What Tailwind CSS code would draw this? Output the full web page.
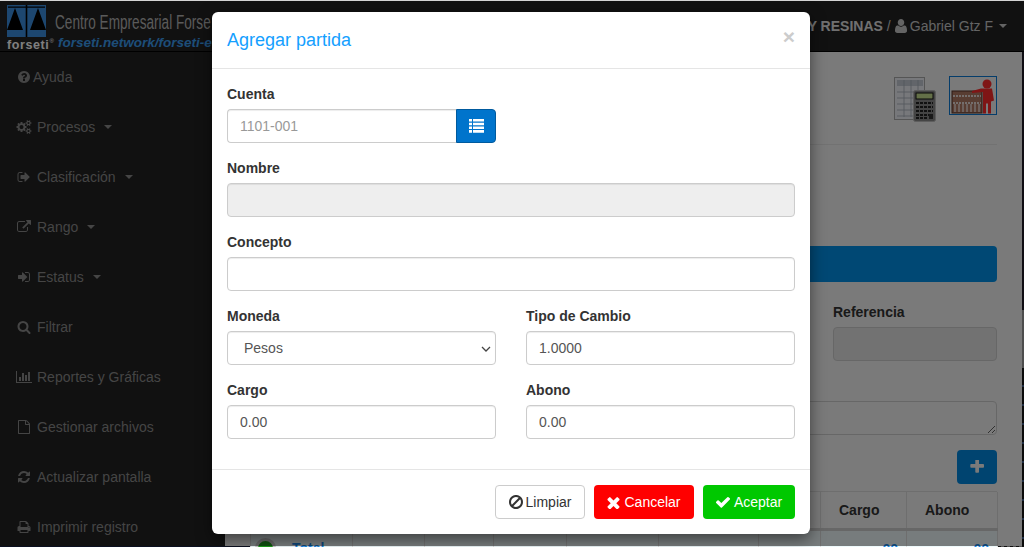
<!DOCTYPE html>
<html lang="es">
<head>
<meta charset="utf-8">
<title>Agregar partida</title>
<script src="https://cdn.jsdelivr.net/npm/@tailwindcss/browser@4"></script>
</head>
<body class="bg-[#222222]">
<div class="relative w-[1024px] h-[547px] overflow-hidden flex flex-col font-['Liberation_Sans',Arial,sans-serif] text-[14px] leading-[20px] text-[#333333]">
  <div class="h-px shrink-0 bg-[#d4d4d4]"></div>

  <div class="relative flex-1 min-h-0 flex flex-col">
    <header class="h-[51px] shrink-0 flex bg-[#222222] border-b border-black">
      <div class="w-[55px] shrink-0 flex flex-col items-start pl-[7px] pt-[4px]">
        <svg class="w-[39px] h-[32px] shrink-0" viewBox="0 0 39 32">
          <rect width="39" height="32" fill="#3a8fe0"/>
          <path d="M1 1.500h37v1.200H1zM18.700 0h1.600v32h-1.600z" fill="#000"/>
          <path d="M8 3 0 25h16zM31 3l-8 22h16z" fill="#000"/>
        </svg>
        <div class="flex items-start h-[14px] mt-[1px]">
          <span class="text-[12.500px] leading-[14px] font-bold tracking-[0.6px] text-[#ffffff]">forseti</span>
          <span class="text-[6px] leading-[7px] text-[#ffffff]">®</span>
        </div>
      </div>
      <div class="flex flex-col whitespace-nowrap overflow-hidden w-[157px] pt-[8px]">
        <span class="text-[20px] leading-[26px] text-[#b4b4b4] origin-left scale-x-[0.68]">Centro Empresarial Forse</span>
        <span class="pl-[3px] text-[13.500px] leading-[16px] font-bold italic text-[#3a9cf0]">forseti.network/forseti-e</span>
      </div>
      <div class="flex-1 flex items-center justify-end pr-[17px] text-[#c8c8c8] whitespace-nowrap">
        <b class="text-[#e0e0e0]">Y RESINAS</b><span class="ml-[4px]">/</span>
        <svg class="w-[12px] h-[14px] ml-[4px] mr-[3px]" viewBox="192 128 1408 1536" fill="currentColor" preserveAspectRatio="none"><path d="M1600 1405q0 120-73 189.500t-194 69.500h-874q-121 0-194-69.500t-73-189.500q0-53 3.500-103.500t14-109 26.500-108.500 43-97.500 62-81 85.500-53.500 111.500-20q9 0 42 21.500t74.500 48 108 48 133.500 21.500 133.500-21.500 108-48 74.500-48 42-21.500q61 0 111.500 20t85.500 53.500 62 81 43 97.500 26.500 108.500 14 109 3.500 103.500zm-320-893q0 159-112.500 271.500t-271.500 112.500-271.500-112.500-112.500-271.500 112.500-271.500 271.500-112.500 271.500 112.500 112.500 271.500z"/></svg>
        <span>Gabriel Gtz F</span>
        <span class="ml-[6px] w-0 h-0 border-x-[4px] border-t-[4px] border-x-transparent border-t-[#c8c8c8]"></span>
      </div>
    </header>

    <div class="flex-1 min-h-0 flex">
      <nav class="w-[225px] shrink-0 bg-[#222222] text-[#8a8a8a]">
        <a class="h-[50px] flex items-center pl-[18px] gap-[3px]">
          <svg class="w-[12px] h-[14px]" viewBox="128 128 1536 1536" fill="currentColor"><path d="M1024 1376v-192q0-14-9-23t-23-9h-192q-14 0-23 9t-9 23v192q0 14 9 23t23 9h192q14 0 23-9t9-23zm256-672q0-88-55.500-163t-138.500-116-170-41q-243 0-371 213-15 24 8 42l132 100q7 6 19 6 16 0 25-12 53-68 86-92 34-24 86-24 48 0 85.500 26t37.500 59q0 38-20 61t-68 45q-63 28-115.500 86.500t-52.500 125.500v36q0 14 9 23t23 9h192q14 0 23-9t9-23q0-19 21.500-49.500t54.500-49.500q32-18 49-28.500t46-35 44.500-48 28-60.500 12.500-81zm384 192q0 209-103 385.500t-279.500 279.500-385.500 103-385.500-103-279.500-279.500-103-385.500 103-385.500 279.500-279.500 385.500-103 385.500 103 279.500 279.500 103 385.500z"/></svg>
          <span>Ayuda</span>
        </a>
        <a class="h-[50px] flex items-center pl-[15px] gap-[4px]">
          <span class="w-[18px] flex justify-center"><svg class="w-[16px] h-[14px]" viewBox="0 0 2048 1792" fill="currentColor"><path d="M960 896q0-106-75-181t-181-75-181 75-75 181 75 181 181 75 181-75 75-181zm768 512q0-52-38-90t-90-38-90 38-38 90q0 53 37.500 90.500t90.500 37.500 90.500-37.500 37.500-90.500zm0-1024q0-52-38-90t-90-38-90 38-38 90q0 53 37.500 90.500t90.500 37.500 90.500-37.500 37.500-90.500zm-384 421v185q0 10-7 19.500t-16 10.500l-155 24q-11 35-32 76 34 48 90 115 7 11 7 20 0 12-7 19-23 30-82.500 89.500t-78.500 59.500q-11 0-21-7l-115-90q-37 19-77 31-11 108-23 155-7 24-30 24h-186q-11 0-20-7.500t-10-17.500l-23-153q-34-10-75-31l-118 89q-7 7-20 7-11 0-21-8-144-133-144-160 0-9 7-19 10-14 41-53t47-61q-23-44-35-82l-152-24q-10-1-17-9.500t-7-19.500v-185q0-10 7-19.500t16-10.500l155-24q11-35 32-76-34-48-90-115-7-11-7-20 0-12 7-20 22-30 82-89t79-59q11 0 21 7l115 90q34-18 77-32 11-108 23-154 7-24 30-24h186q11 0 20 7.500t10 17.500l23 153q34 10 75 31l118-89q8-7 20-7 11 0 21 8 144 133 144 160 0 8-7 19-12 16-42 54t-45 60q23 48 34 82l152 23q10 2 17 10.500t7 19.500zm640 533v140q0 16-149 31-12 27-30 52 51 113 51 138 0 4-4 7-122 71-124 71-8 0-46-47t-52-68q-20 2-30 2t-30-2q-14 21-52 68t-46 47q-2 0-124-71-4-3-4-7 0-25 51-138-18-25-30-52-149-15-149-31v-140q0-16 149-31 13-29 30-52-51-113-51-138 0-4 4-7 4-2 35-20t59-34 30-16q8 0 46 46.500t52 67.500q20-2 30-2t30 2q51-71 92-112l6-2q4 0 124 70 4 3 4 7 0 25-51 138 17 23 30 52 149 15 149 31zm0-1024v140q0 16-149 31-12 27-30 52 51 113 51 138 0 4-4 7-122 71-124 71-8 0-46-47t-52-68q-20 2-30 2t-30-2q-14 21-52 68t-46 47q-2 0-124-71-4-3-4-7 0-25 51-138-18-25-30-52-149-15-149-31v-140q0-16 149-31 13-29 30-52-51-113-51-138 0-4 4-7 4-2 35-20t59-34 30-16q8 0 46 46.500t52 67.500q20-2 30-2t30 2q51-71 92-112l6-2q4 0 124 70 4 3 4 7 0 25-51 138 17 23 30 52 149 15 149 31z"/></svg></span>
          <span>Procesos</span>
          <span class="ml-[5px] w-0 h-0 border-x-[4px] border-t-[4px] border-x-transparent border-t-[#8a8a8a]"></span>
        </a>
        <a class="h-[50px] flex items-center pl-[15px] gap-[4px]">
          <span class="w-[18px] flex justify-center"><svg class="w-[14px] h-[14px]" viewBox="0 0 1792 1792" fill="currentColor"><path d="M704 1440q0 4 1 20t.5 26.500-3 23.500-10 19.500-20.500 6.500h-320q-119 0-203.500-84.500t-84.500-203.500v-704q0-119 84.500-203.500t203.500-84.500h320q13 0 22.500 9.500t9.500 22.500q0 4 1 20t.5 26.500-3 23.500-10 19.500-20.500 6.500h-320q-66 0-113 47t-47 113v704q0 66 47 113t113 47h312l11.500 1 11.500 3 8 5.500 7 9 2 13.500zm928-544q0 26-19 45l-544 544q-19 19-45 19t-45-19-19-45v-288h-448q-26 0-45-19t-19-45v-384q0-26 19-45t45-19h448v-288q0-26 19-45t45-19 45 19l544 544q19 19 19 45z"/></svg></span>
          <span>Clasificación</span>
          <span class="ml-[5px] w-0 h-0 border-x-[4px] border-t-[4px] border-x-transparent border-t-[#8a8a8a]"></span>
        </a>
        <a class="h-[50px] flex items-center pl-[15px] gap-[4px]">
          <span class="w-[18px] flex justify-center"><svg class="w-[14px] h-[14px]" viewBox="0 0 1792 1792" fill="currentColor"><path d="M1408 928v320q0 119-84.500 203.500t-203.500 84.500h-832q-119 0-203.500-84.500t-84.500-203.500v-832q0-119 84.500-203.500t203.500-84.500h704q14 0 23 9t9 23v64q0 14-9 23t-23 9h-704q-66 0-113 47t-47 113v832q0 66 47 113t113 47h832q66 0 113-47t47-113v-320q0-14 9-23t23-9h64q14 0 23 9t9 23zm384-864v512q0 26-19 45t-45 19-45-19l-176-176-652 652q-10 10-23 10t-23-10l-114-114q-10-10-10-23t10-23l652-652-176-176q-19-19-19-45t19-45 45-19h512q26 0 45 19t19 45z"/></svg></span>
          <span>Rango</span>
          <span class="ml-[5px] w-0 h-0 border-x-[4px] border-t-[4px] border-x-transparent border-t-[#8a8a8a]"></span>
        </a>
        <a class="h-[50px] flex items-center pl-[15px] gap-[4px]">
          <span class="w-[18px] flex justify-center"><svg class="w-[14px] h-[14px]" viewBox="0 0 1792 1792" fill="currentColor"><path d="M1312 896q0 26-19 45l-544 544q-19 19-45 19t-45-19-19-45v-288h-448q-26 0-45-19t-19-45v-384q0-26 19-45t45-19h448v-288q0-26 19-45t45-19 45 19l544 544q19 19 19 45zm352-352v704q0 119-84.500 203.500t-203.500 84.500h-320q-13 0-22.500-9.500t-9.500-22.500q0-4-1-20t-.5-26.500 3-23.500 10-19.500 20.500-6.500h320q66 0 113-47t47-113v-704q0-66-47-113t-113-47h-312l-11.500-1-11.500-3-8-5.500-7-9-2-13.500q0-4-1-20t-.5-26.500 3-23.500 10-19.500 20.500-6.500h320q119 0 203.500 84.500t84.500 203.500z"/></svg></span>
          <span>Estatus</span>
          <span class="ml-[5px] w-0 h-0 border-x-[4px] border-t-[4px] border-x-transparent border-t-[#8a8a8a]"></span>
        </a>
        <a class="h-[50px] flex items-center pl-[15px] gap-[4px]">
          <span class="w-[18px] flex justify-center"><svg class="w-[14px] h-[14px]" viewBox="0 0 1792 1792" fill="currentColor"><path d="M1216 832q0-185-131.500-316.500t-316.500-131.500-316.500 131.500-131.500 316.500 131.500 316.500 316.500 131.500 316.500-131.500 131.500-316.500zm512 832q0 52-38 90t-90 38q-54 0-90-38l-343-342q-179 124-399 124-143 0-273.500-55.500t-225-150-150-225-55.500-273.500 55.500-273.500 150-225 225-150 273.500-55.500 273.500 55.500 225 150 150 225 55.500 273.500q0 220-124 399l343 343q37 37 37 90z"/></svg></span>
          <span>Filtrar</span>
        </a>
        <a class="h-[50px] flex items-center pl-[15px] gap-[4px]">
          <span class="w-[18px] flex justify-center"><svg class="w-[16px] h-[14px]" viewBox="0 0 2048 1792" fill="currentColor"><path d="M640 896v512h-256v-512h256zm384-512v1024h-256v-1024h256zm1024 1152v128h-2048v-1536h128v1408h1920zm-640-896v768h-256v-768h256zm384-384v1152h-256v-1152h256z"/></svg></span>
          <span>Reportes y Gráficas</span>
        </a>
        <a class="h-[50px] flex items-center pl-[15px] gap-[4px]">
          <span class="w-[18px] flex justify-center"><svg class="w-[14px] h-[14px]" viewBox="0 0 1792 1792" fill="currentColor"><path d="M1596 380q28 28 48 76t20 88v1152q0 40-28 68t-68 28h-1344q-40 0-68-28t-28-68v-1600q0-40 28-68t68-28h896q40 0 88 20t76 48zm-444-244v376h376q-10-29-22-41l-313-313q-12-12-41-22zm384 1528v-1024h-416q-40 0-68-28t-28-68v-416h-768v1536h1280z"/></svg></span>
          <span>Gestionar archivos</span>
        </a>
        <a class="h-[50px] flex items-center pl-[15px] gap-[4px]">
          <span class="w-[18px] flex justify-center"><svg class="w-[14px] h-[14px]" viewBox="0 0 1792 1792" fill="currentColor"><path d="M1639 1056q0 5-1 7-64 268-268 434.500t-478 166.500q-146 0-282.500-55t-243.500-157l-129 129q-19 19-45 19t-45-19-19-45v-448q0-26 19-45t45-19h448q26 0 45 19t19 45-19 45l-137 137q71 66 161 102t187 36q134 0 250-65t186-179q11-17 53-117 8-23 30-23h192q13 0 22.500 9.500t9.500 22.500zm25-800v448q0 26-19 45t-45 19h-448q-26 0-45-19t-19-45 19-45l138-138q-148-137-349-137-134 0-250 65t-186 179q-11 17-53 117-8 23-30 23h-199q-13 0-22.500-9.500t-9.500-22.500v-7q65-268 270-434.500t480-166.500q146 0 284 55.500t245 156.500l130-129q19-19 45-19t45 19 19 45z"/></svg></span>
          <span>Actualizar pantalla</span>
        </a>
        <a class="h-[50px] flex items-center pl-[15px] gap-[4px]">
          <span class="w-[18px] flex justify-center"><svg class="w-[14px] h-[14px]" viewBox="0 0 1792 1792" fill="currentColor"><path d="M448 1536h896v-256h-896v256zm0-640h896v-384h-160q-40 0-68-28t-28-68v-160h-640v640zm1152 64q0-26-19-45t-45-19-45 19-19 45 19 45 45 19 45-19 19-45zm128 0v416q0 13-9.500 22.500t-22.500 9.500h-224v160q0 40-28 68t-68 28h-960q-40 0-68-28t-28-68v-160h-224q-13 0-22.500-9.500t-9.500-22.500v-416q0-79 56.500-135.500t135.500-56.500h64v-544q0-40 28-68t68-28h672q40 0 88 20t76 48l152 152q28 28 48 76t20 88v256h64q79 0 135.500 56.500t56.500 135.500z"/></svg></span>
          <span>Imprimir registro</span>
        </a>
      </nav>

      <main class="flex-1 min-w-0 bg-[#f4f4f4] pl-[25px] pr-[25px] flex flex-col">
        <div class="mt-[24px] h-[47px] shrink-0 flex justify-end items-start gap-[13px]">
          <svg class="w-[42px] h-[47px]" viewBox="0 0 42 47">
            <rect x=".5" y="1.500" width="30" height="42" fill="#eef1f6" stroke="#aaa"/>
            <path d="M3 4h26v6H3z" fill="#c4cad4"/>
            <path d="M3 16h26M3 22h26M3 28h26M3 34h26M3 40h26M10 4v37M17 4v37M24 4v37" stroke="#a4acb8" stroke-width=".8"/>
            <rect x="19.500" y="14.500" width="22" height="31" rx="2" fill="#888" stroke="#bbb"/>
            <rect x="22" y="17" width="17" height="6" fill="#c8e090" stroke="#111"/>
            <path d="M22 27h17M22 31h17M22 35h17M22 39h17M22 42h12" stroke="#222" stroke-width="2" stroke-dasharray="3 1"/>
            <rect x="35" y="38" width="4" height="5" fill="#333"/>
          </svg>
          <div class="w-[48px] h-[39px] border border-[#0a7ad6] bg-[#f4f4f4] overflow-hidden">
            <svg class="w-[46px] h-[37px]" viewBox="0 0 46 37">
              <rect x="2" y="14" width="30" height="22" fill="#b07a64" stroke="#5a3428"/>
              <path d="M3 19h28M3 26h28" stroke="#e8dcd8" stroke-width="2" stroke-dasharray="2 1"/>
              <path d="M5 27v8M9 27v8M13 27v8M17 27v8M21 27v8M25 27v8M29 27v8" stroke="#e8dcd8" stroke-width="1.500"/>
              <circle cx="37" cy="7" r="4.500" fill="#ff2a2a"/>
              <path d="M22 14l9-2.500h11l2 12-3 1v12h-3v-10h-2v10h-3V15l-11 1z" fill="#ff2a2a"/>
            </svg>
          </div>
        </div>
        <div class="mt-[21px] h-px shrink-0 bg-[#e4e4e4]"></div>
        <div class="mt-[101px] h-[36px] shrink-0 rounded-[4px] bg-[#0090e8]"></div>
        <div class="mt-[20px] shrink-0 self-end w-[164px]">
          <label class="block font-bold mb-[5px] h-[20px]">Referencia</label>
          <input disabled class="block w-full h-[34px] rounded-[4px] border border-[#cfcfcf] bg-[#e4e4e4]">
        </div>
        <textarea class="mt-[40px] block w-full h-[34px] shrink-0 rounded-[4px] border border-[#cfcfcf] bg-[#f4f4f4]"></textarea>
        <button class="mt-[15px] self-end w-[40px] h-[34px] shrink-0 rounded-[4px] bg-[#0088e0] flex items-center justify-center text-[#f4f4f4]">
          <svg class="w-[14px] h-[14px]" viewBox="160 224 1440 1440" fill="currentColor"><path d="M1600 736v192q0 40-28 68t-68 28h-416v416q0 40-28 68t-68 28h-192q-40 0-68-28t-28-68v-416h-416q-40 0-68-28t-28-68v-192q0-40 28-68t68-28h416v-416q0-40 28-68t68-28h192q40 0 68 28t28 68v416h416q40 0 68 28t28 68z"/></svg>
        </button>
        <div class="mt-[7px] shrink-0 grid grid-cols-[102px_72px_69px_73px_92px_100px_62px_86px_91px] border-l border-t border-[#dddddd] font-bold">
          <div class="h-[36px] border-r border-[#dddddd]"></div>
          <div class="h-[36px] border-r border-[#dddddd]"></div>
          <div class="h-[36px] border-r border-[#dddddd]"></div>
          <div class="h-[36px] border-r border-[#dddddd]"></div>
          <div class="h-[36px] border-r border-[#dddddd]"></div>
          <div class="h-[36px] border-r border-[#dddddd]"></div>
          <div class="h-[36px] border-r border-[#dddddd]"></div>
          <div class="h-[36px] border-r border-[#dddddd] pl-[18px] flex items-center">Cargo</div>
          <div class="h-[36px] border-r border-[#dddddd] pl-[18px] flex items-center">Abono</div>
          <div class="col-span-9 h-[3px] bg-[#cfcfcf]"></div>
          <div class="h-[40px] border-r border-[#dddddd] bg-[#eef9fb] pt-[7px] pl-[4px] flex items-start">
            <span class="w-[21px] h-[21px] rounded-full bg-[#1ea01e] border-[3px] border-[#cccccc] shrink-0"></span>
            <span class="ml-[16px] text-[#1a88e8]">Total</span>
          </div>
          <div class="h-[40px] border-r border-[#dddddd] bg-[#eef9fb]"></div>
          <div class="h-[40px] border-r border-[#dddddd] bg-[#eef9fb]"></div>
          <div class="h-[40px] border-r border-[#dddddd] bg-[#eef9fb]"></div>
          <div class="h-[40px] border-r border-[#dddddd] bg-[#eef9fb]"></div>
          <div class="h-[40px] border-r border-[#dddddd] bg-[#eef9fb]"></div>
          <div class="h-[40px] border-r border-[#dddddd] bg-[#eef9fb]"></div>
          <div class="h-[40px] border-r border-[#dddddd] bg-[#eef9fb] pt-[8px] pr-[8px] text-right text-[#1a88e8]">.00</div>
          <div class="h-[40px] border-r border-[#dddddd] bg-[#eef9fb] pt-[8px] pr-[8px] text-right text-[#1a88e8]">.00</div>
        </div>
      </main>

      <div class="w-[2px] shrink-0 flex flex-col bg-[#222222]">
        <div class="h-[258px] shrink-0 bg-[#1f1a26]"></div>
        <div class="h-[58px] shrink-0 bg-[#9a9a9a]"></div>
        <div class="flex-1 bg-[repeating-linear-gradient(180deg,#161616_0,#161616_17px,#3c5a86_17px,#3c5a86_19px)]"></div>
      </div>
    </div>

    <div class="absolute inset-0 bg-black/50"></div>
  </div>

  <div class="h-px shrink-0 flex bg-[#0b1020]">
    <div class="w-[833px] shrink-0"></div>
    <div class="flex-1 bg-[repeating-linear-gradient(90deg,#555555_0,#555555_3px,#111111_3px,#111111_6px)]"></div>
  </div>

  <section class="absolute left-[212px] top-[12px] w-[598px] h-[522px] bg-white rounded-[6px] shadow-[0_5px_15px_rgba(0,0,0,0.5)] flex flex-col">
    <div class="h-[57px] shrink-0 border-b border-[#e5e5e5] pl-[15px] pr-[15px] flex items-center justify-between">
      <h4 class="text-[18px] leading-[26px] text-[#14a0ff]">Agregar partida</h4>
      <span class="text-[21px] leading-[21px] font-bold text-[#cccccc] -mt-[7px]">×</span>
    </div>
    <form class="flex-1 px-[15px] pt-[15px]">
      <label class="block h-[20px] font-bold mb-[5px]">Cuenta</label>
      <div class="flex w-[269px] h-[34px] mb-[15px]">
        <input placeholder="1101-001" class="w-[229px] h-[34px] px-[12px] rounded-l-[4px] border border-r-0 border-[#cccccc] text-[#555555] placeholder:text-[#999999] shadow-[inset_0_1px_1px_rgba(0,0,0,0.075)]">
        <button type="button" class="w-[40px] h-[34px] rounded-r-[4px] bg-[#0074cc] border border-[#005a9e] flex items-center justify-center">
          <svg class="w-[15px] h-[14px]" viewBox="0 0 15 14" fill="#ffffff"><path d="M0 0h3v2.600H0zM4 0h11v2.600H4zM0 3.700h3v2.600H0zM4 3.700h11v2.600H4zM0 7.400h3v2.600H0zM4 7.400h11v2.600H4zM0 11.100h3v2.600H0zM4 11.100h11v2.600H4z"/></svg>
        </button>
      </div>
      <label class="block h-[20px] font-bold mb-[5px]">Nombre</label>
      <input disabled class="block w-full h-[34px] mb-[15px] px-[12px] rounded-[4px] border border-[#cccccc] bg-[#eeeeee] shadow-[inset_0_1px_1px_rgba(0,0,0,0.075)]">
      <label class="block h-[20px] font-bold mb-[5px]">Concepto</label>
      <input class="block w-full h-[34px] mb-[15px] px-[12px] rounded-[4px] border border-[#cccccc] text-[#555555] shadow-[inset_0_1px_1px_rgba(0,0,0,0.075)]">
      <div class="grid grid-cols-2 gap-x-[30px]">
        <div class="mb-[15px]">
          <label class="block h-[20px] font-bold mb-[5px]">Moneda</label>
          <div class="relative">
            <select class="block w-full h-[34px] pl-[16px] pr-[24px] appearance-none rounded-[4px] border border-[#cccccc] bg-white text-[#555555] shadow-[inset_0_1px_1px_rgba(0,0,0,0.075)]"><option>Pesos</option></select>
            <svg class="absolute right-[5px] top-[15px] w-[10px] h-[6px] pointer-events-none" viewBox="0 0 10 6" fill="none" stroke="#444444" stroke-width="1.300"><path d="M1 1l4 4 4-4"/></svg>
          </div>
        </div>
        <div class="mb-[15px]">
          <label class="block h-[20px] font-bold mb-[5px]">Tipo de Cambio</label>
          <input value="1.0000" class="block w-full h-[34px] px-[12px] rounded-[4px] border border-[#cccccc] text-[#555555] shadow-[inset_0_1px_1px_rgba(0,0,0,0.075)]">
        </div>
        <div>
          <label class="block h-[20px] font-bold mb-[5px]">Cargo</label>
          <input value="0.00" class="block w-full h-[34px] px-[12px] rounded-[4px] border border-[#cccccc] text-[#555555] shadow-[inset_0_1px_1px_rgba(0,0,0,0.075)]">
        </div>
        <div>
          <label class="block h-[20px] font-bold mb-[5px]">Abono</label>
          <input value="0.00" class="block w-full h-[34px] px-[12px] rounded-[4px] border border-[#cccccc] text-[#555555] shadow-[inset_0_1px_1px_rgba(0,0,0,0.075)]">
        </div>
      </div>
    </form>
    <div class="h-[65px] shrink-0 border-t border-[#e5e5e5] pr-[15px] flex items-center justify-end gap-[9px]">
      <button class="w-[90px] h-[34px] rounded-[4px] bg-white border border-[#cccccc] text-[#333333] flex items-center justify-center gap-[3px]">
        <svg class="w-[14px] h-[14px]" viewBox="128 128 1536 1536" fill="currentColor"><path d="M1440 893q0-161-87-295l-754 753q137 89 297 89 111 0 211.500-43.500t173.500-116.500 116-174.500 43-212.500zm-999 299l755-754q-135-91-300-91-148 0-273 73t-198 199-73 274q0 162 89 299zm1223-299q0 157-61 300t-163.500 246-245 164-298.500 61-298.500-61-245-164-163.500-246-61-300 61-299.500 163.500-245.500 245-164 298.500-61 298.500 61 245 164 163.500 245.500 61 299.500z"/></svg>
        <span>Limpiar</span>
      </button>
      <button class="w-[100px] h-[34px] rounded-[4px] bg-[#ff0000] text-white flex items-center justify-center gap-[4px]">
        <svg class="w-[13px] h-[13px]" viewBox="256 256 1280 1280" fill="currentColor"><path d="M1490 1322q0 40-28 68l-136 136q-28 28-68 28t-68-28l-294-294-294 294q-28 28-68 28t-68-28l-136-136q-28-28-28-68t28-68l294-294-294-294q-28-28-28-68t28-68l136-136q28-28 68-28t68 28l294 294 294-294q28-28 68-28t68 28l136 136q28 28 28 68t-28 68l-294 294 294 294q28 28 28 68z"/></svg>
        <span>Cancelar</span>
      </button>
      <button class="w-[92px] h-[34px] rounded-[4px] bg-[#00c800] text-white flex items-center justify-center gap-[4px]">
        <svg class="w-[14px] h-[14px]" viewBox="128 128 1536 1536" fill="currentColor"><path d="M1671 566q0 40-28 68l-724 724-136 136q-28 28-68 28t-68-28l-136-136-362-362q-28-28-28-68t28-68l136-136q28-28 68-28t68 28l294 295 656-657q28-28 68-28t68 28l136 136q28 28 28 68z"/></svg>
        <span>Aceptar</span>
      </button>
    </div>
  </section>
</div>
</body>
</html>
